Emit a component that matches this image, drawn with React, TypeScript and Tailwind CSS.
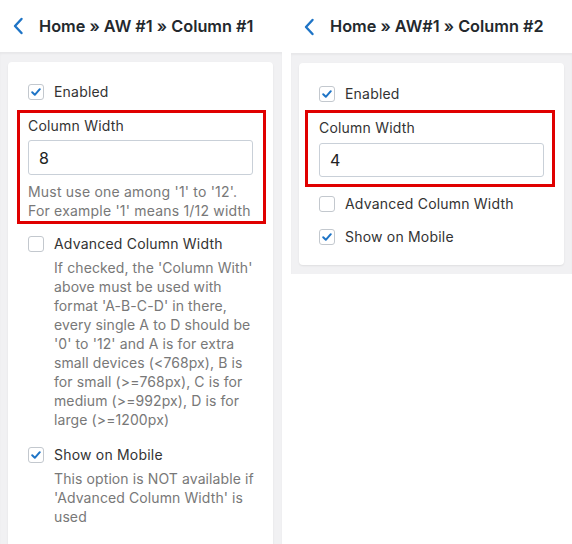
import React from "react";

const font = { fontFamily: "Inter, 'Noto Sans', 'Liberation Sans', sans-serif" };

function Chevron() {
  return (
    <svg width="12" height="18" viewBox="0 0 12 18" className="shrink-0">
      <polyline points="9.5,2 3,9 9.5,16" fill="none" stroke="#1e74c6" strokeWidth="2.4" strokeLinecap="round" strokeLinejoin="round" />
    </svg>
  );
}

function Check({ checked }: { checked: boolean }) {
  return (
    <div className="w-[16px] h-[16px] shrink-0 rounded-[3px] border border-[#c3c8ce] bg-white flex items-center justify-center">
      {checked && (
        <svg width="12" height="12" viewBox="0 0 12 12">
          <polyline points="2.2,6.3 4.8,8.8 9.8,3.2" fill="none" stroke="#1e74c6" strokeWidth="2" strokeLinecap="round" strokeLinejoin="round" />
        </svg>
      )}
    </div>
  );
}

function Row({ checked, label }: { checked: boolean; label: string }) {
  return (
    <div className="flex items-center h-[20px]">
      <Check checked={checked} />
      <span className="ml-[10px] text-[14px] leading-[20px] tracking-[0.2px] text-[#333]">{label}</span>
    </div>
  );
}

function Header({ title, h }: { title: string; h: string }) {
  return (
    <div className={`${h} shrink-0 flex items-center pl-[12px] bg-white`}>
      <Chevron />
      <span className="ml-[15px] text-[16.3px] font-semibold text-[#23282d]">{title}</span>
    </div>
  );
}

function Input({ value, h }: { value: string; h: string }) {
  return (
    <div className={`${h} w-full border border-[#c9d0d8] rounded-[3px] bg-white flex items-center pl-[10px] text-[16px] text-[#222]`}>
      {value}
    </div>
  );
}

export default function App() {
  return (
    <div className="w-[572px] h-[544px] flex bg-white overflow-hidden" style={font}>
      {/* Left column */}
      <div className="w-[282px] h-[544px] flex flex-col shrink-0">
        <Header title="Home » AW #1 » Column #1" h="h-[52px]" />
        <div className="flex-1 min-h-0 overflow-hidden bg-[#f1f1f3] pt-[10px] pl-[8px] pr-[9px] shadow-[inset_0_2px_2px_rgba(0,0,0,0.04)]">
          <div className="bg-white rounded-[4px] shadow-[0_1px_2px_rgba(0,0,0,0.08)] px-[20px] pt-[20px] pb-[30px]">
            <Row checked label="Enabled" />
            <div className="mt-[8px] -ml-[11px] -mr-[13px] border-[3px] border-[#e00000] pl-[8px] pr-[10px] pt-[3px] pb-[1px]">
              <div className="text-[14px] leading-[20px] tracking-[0.2px] text-[#333]">Column Width</div>
              <div className="mt-[4px]">
                <Input value="8" h="h-[35px]" />
              </div>
              <div className="mt-[7px] text-[14px] leading-[19px] tracking-[0.2px] text-[#787878]">
                Must use one among '1' to '12'.<br />For example '1' means 1/12 width
              </div>
            </div>
            <div className="mt-[10px]">
              <Row checked={false} label="Advanced Column Width" />
            </div>
            <div className="mt-[4px] pl-[26px] -mr-[4px] text-[14px] leading-[19px] tracking-[0.1px] text-[#787878]">
              If checked, the 'Column With' above must be used with format 'A-B-C-D' in there, every single A to D should be '0' to '12' and A is for extra small devices (&lt;768px), B is for small (&gt;=768px), C is for medium (&gt;=992px), D is for large (&gt;=1200px)
            </div>
            <div className="mt-[16px]">
              <Row checked label="Show on Mobile" />
            </div>
            <div className="mt-[4px] pl-[26px] -mr-[4px] text-[14px] leading-[19px] tracking-[0.1px] text-[#787878]">
              This option is NOT available if 'Advanced Column Width' is used
            </div>
          </div>
        </div>
      </div>
      <div className="w-[9px] shrink-0 bg-white" />
      {/* Right column */}
      <div className="flex-1 flex flex-col">
        <Header title="Home » AW#1 » Column #2" h="h-[53px]" />
        <div className="bg-[#f1f1f3] pt-[10px] pl-[8px] pr-[8px] pb-[9px] shadow-[inset_0_2px_2px_rgba(0,0,0,0.04)]">
          <div className="bg-white rounded-[4px] shadow-[0_1px_2px_rgba(0,0,0,0.08)] px-[20px] pt-[21px] pb-[18px]">
            <Row checked label="Enabled" />
            <div className="mt-[6px] -ml-[14px] -mr-[11px] border-[3px] border-[#e00000] pl-[11px] pr-[8px] pt-[5px] pb-[7px]">
              <div className="text-[14px] leading-[20px] tracking-[0.2px] text-[#333]">Column Width</div>
              <div className="mt-[5px]">
                <Input value="4" h="h-[34px]" />
              </div>
            </div>
            <div className="mt-[7px]">
              <Row checked={false} label="Advanced Column Width" />
            </div>
            <div className="mt-[13px]">
              <Row checked label="Show on Mobile" />
            </div>
          </div>
        </div>
      </div>
    </div>
  );
}
